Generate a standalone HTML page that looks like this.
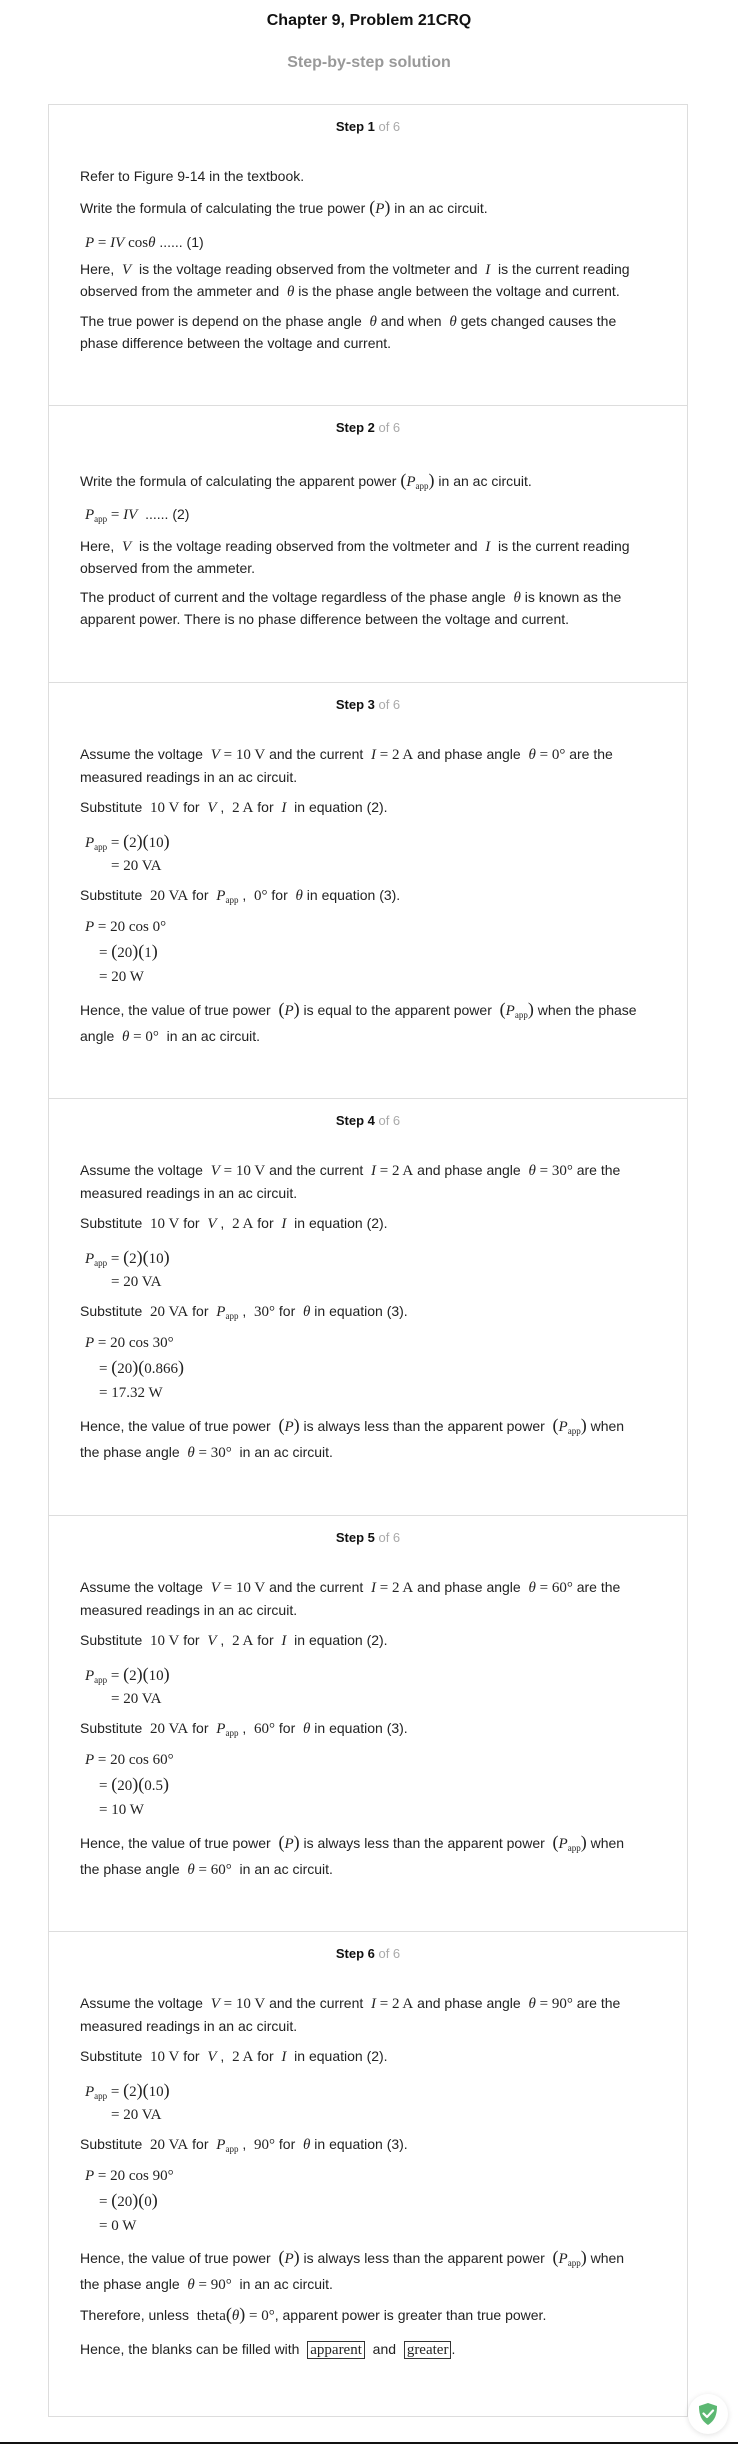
<!DOCTYPE html>
<html><head><meta charset="utf-8"><style>
body{margin:0;background:#fff;font-family:"Liberation Sans",Arial,sans-serif;color:#222;}
.page{position:relative;width:738px;height:2444px;overflow:hidden;}
.t{position:absolute;left:0;width:738px;text-align:center;top:10px;font-size:16px;font-weight:bold;color:#111;line-height:22px;}
.st{position:absolute;left:0;width:738px;text-align:center;top:52px;font-size:16px;font-weight:bold;color:#999;line-height:22px;}
.box{position:absolute;left:48px;width:640px;border:1px solid #ddd;border-top:none;box-sizing:border-box;}
.box.first{border-top:1px solid #ddd;}
.h{position:absolute;left:0;width:100%;text-align:center;font-size:13px;font-weight:bold;color:#111;line-height:22px;}
.h span{font-weight:normal;color:#aaa;}
.l{position:absolute;left:31px;font-size:14px;line-height:22px;white-space:nowrap;color:#222;}
.m{font-family:"Liberation Serif",serif;font-size:15px;}
.i{font-style:italic;}
sub{font-size:9px;font-family:"Liberation Serif",serif;vertical-align:-3px;}
.p{font-family:"Liberation Serif",serif;font-size:18px;}
.bx{border:1px solid #333;padding:0 2px;font-family:"Liberation Serif",serif;font-size:15px;}
.shield{position:absolute;left:688px;top:2394px;width:40px;height:40px;border-radius:50%;background:#fff;box-shadow:0 1px 6px rgba(0,0,0,0.12);}
.bl{position:absolute;left:0;top:2442px;width:738px;height:2px;background:#111;}
</style></head><body><div class="page">
<div class="t">Chapter 9, Problem 21CRQ</div>
<div class="st">Step-by-step solution</div>

<div class="box first" style="top:104px;height:302px;">
<div class="h" style="top:11px">Step 1 <span>of 6</span></div>
<div class="l" style="top:60px">Refer to Figure 9-14 in the textbook.</div>
<div class="l" style="top:91px">Write the formula of calculating the true power <span class="p">(</span><span class="m i">P</span><span class="p">)</span> in an ac circuit.</div>
<div class="l" style="top:126px;left:36px"><span class="m"><i>P</i> = <i>IV</i> cos<i>θ</i></span> ...... (1)</div>
<div class="l" style="top:153px">Here, &nbsp;<span class="m i">V</span>&nbsp; is the voltage reading observed from the voltmeter and &nbsp;<span class="m i">I</span>&nbsp; is the current reading</div>
<div class="l" style="top:175px">observed from the ammeter and &nbsp;<span class="m i">θ</span> is the phase angle between the voltage and current.</div>
<div class="l" style="top:205px">The true power is depend on the phase angle &nbsp;<span class="m i">θ</span> and when &nbsp;<span class="m i">θ</span> gets changed causes the</div>
<div class="l" style="top:227px">phase difference between the voltage and current.</div>
</div>

<div class="box" style="top:405px;height:278px;border-top:1px solid #ddd;">
<div class="h" style="top:11px">Step 2 <span>of 6</span></div>
<div class="l" style="top:63px">Write the formula of calculating the apparent power <span class="p">(</span><span class="m i">P</span><sub>app</sub><span class="p">)</span> in an ac circuit.</div>
<div class="l" style="top:97px;left:36px"><span class="m"><i>P</i></span><sub>app</sub><span class="m"> = <i>IV</i></span> &nbsp;...... (2)</div>
<div class="l" style="top:129px">Here, &nbsp;<span class="m i">V</span>&nbsp; is the voltage reading observed from the voltmeter and &nbsp;<span class="m i">I</span>&nbsp; is the current reading</div>
<div class="l" style="top:151px">observed from the ammeter.</div>
<div class="l" style="top:180px">The product of current and the voltage regardless of the phase angle &nbsp;<span class="m i">θ</span> is known as the</div>
<div class="l" style="top:202px">apparent power. There is no phase difference between the voltage and current.</div>
</div>

<!-- Step 3 -->
<div class="box" style="top:682px;height:417px;border-top:1px solid #ddd;">
<div class="h" style="top:11px">Step 3 <span>of 6</span></div>
<div class="l" style="top:60px">Assume the voltage &nbsp;<span class="m"><i>V</i> = 10 V</span> and the current &nbsp;<span class="m"><i>I</i> = 2 A</span> and phase angle &nbsp;<span class="m"><i>θ</i> = 0°</span> are the</div>
<div class="l" style="top:83px">measured readings in an ac circuit.</div>
<div class="l" style="top:113px">Substitute &nbsp;<span class="m">10 V</span> for &nbsp;<span class="m i">V</span> , &nbsp;<span class="m">2 A</span> for &nbsp;<span class="m i">I</span>&nbsp; in equation (2).</div>
<div class="l" style="top:147px;left:36px"><span class="m i">P</span><sub>app</sub><span class="m"> = <span class="p">(</span>2<span class="p">)(</span>10<span class="p">)</span></span></div>
<div class="l" style="top:171px;left:62px"><span class="m">= 20 VA</span></div>
<div class="l" style="top:201px">Substitute &nbsp;<span class="m">20 VA</span> for &nbsp;<span class="m i">P</span><sub>app</sub> , &nbsp;<span class="m">0°</span> for &nbsp;<span class="m i">θ</span> in equation (3).</div>
<div class="l" style="top:232px;left:36px"><span class="m"><i>P</i> = 20 cos 0°</span></div>
<div class="l" style="top:257px;left:50px"><span class="m">= <span class="p">(</span>20<span class="p">)(</span>1<span class="p">)</span></span></div>
<div class="l" style="top:282px;left:50px"><span class="m">= 20 W</span></div>
<div class="l" style="top:315px">Hence, the value of true power &nbsp;<span class="p">(</span><span class="m i">P</span><span class="p">)</span> is equal to the apparent power &nbsp;<span class="p">(</span><span class="m i">P</span><sub>app</sub><span class="p">)</span> when the phase</div>
<div class="l" style="top:342px">angle &nbsp;<span class="m"><i>θ</i> = 0°</span>&nbsp; in an ac circuit.</div>
</div>

<!-- Step 4 -->
<div class="box" style="top:1098px;height:418px;border-top:1px solid #ddd;">
<div class="h" style="top:11px">Step 4 <span>of 6</span></div>
<div class="l" style="top:60px">Assume the voltage &nbsp;<span class="m"><i>V</i> = 10 V</span> and the current &nbsp;<span class="m"><i>I</i> = 2 A</span> and phase angle &nbsp;<span class="m"><i>θ</i> = 30°</span> are the</div>
<div class="l" style="top:83px">measured readings in an ac circuit.</div>
<div class="l" style="top:113px">Substitute &nbsp;<span class="m">10 V</span> for &nbsp;<span class="m i">V</span> , &nbsp;<span class="m">2 A</span> for &nbsp;<span class="m i">I</span>&nbsp; in equation (2).</div>
<div class="l" style="top:147px;left:36px"><span class="m i">P</span><sub>app</sub><span class="m"> = <span class="p">(</span>2<span class="p">)(</span>10<span class="p">)</span></span></div>
<div class="l" style="top:171px;left:62px"><span class="m">= 20 VA</span></div>
<div class="l" style="top:201px">Substitute &nbsp;<span class="m">20 VA</span> for &nbsp;<span class="m i">P</span><sub>app</sub> , &nbsp;<span class="m">30°</span> for &nbsp;<span class="m i">θ</span> in equation (3).</div>
<div class="l" style="top:232px;left:36px"><span class="m"><i>P</i> = 20 cos 30°</span></div>
<div class="l" style="top:257px;left:50px"><span class="m">= <span class="p">(</span>20<span class="p">)(</span>0.866<span class="p">)</span></span></div>
<div class="l" style="top:282px;left:50px"><span class="m">= 17.32 W</span></div>
<div class="l" style="top:315px">Hence, the value of true power &nbsp;<span class="p">(</span><span class="m i">P</span><span class="p">)</span> is always less than the apparent power &nbsp;<span class="p">(</span><span class="m i">P</span><sub>app</sub><span class="p">)</span> when</div>
<div class="l" style="top:342px">the phase angle &nbsp;<span class="m"><i>θ</i> = 30°</span>&nbsp; in an ac circuit.</div>
</div>

<!-- Step 5 -->
<div class="box" style="top:1515px;height:417px;border-top:1px solid #ddd;">
<div class="h" style="top:11px">Step 5 <span>of 6</span></div>
<div class="l" style="top:60px">Assume the voltage &nbsp;<span class="m"><i>V</i> = 10 V</span> and the current &nbsp;<span class="m"><i>I</i> = 2 A</span> and phase angle &nbsp;<span class="m"><i>θ</i> = 60°</span> are the</div>
<div class="l" style="top:83px">measured readings in an ac circuit.</div>
<div class="l" style="top:113px">Substitute &nbsp;<span class="m">10 V</span> for &nbsp;<span class="m i">V</span> , &nbsp;<span class="m">2 A</span> for &nbsp;<span class="m i">I</span>&nbsp; in equation (2).</div>
<div class="l" style="top:147px;left:36px"><span class="m i">P</span><sub>app</sub><span class="m"> = <span class="p">(</span>2<span class="p">)(</span>10<span class="p">)</span></span></div>
<div class="l" style="top:171px;left:62px"><span class="m">= 20 VA</span></div>
<div class="l" style="top:201px">Substitute &nbsp;<span class="m">20 VA</span> for &nbsp;<span class="m i">P</span><sub>app</sub> , &nbsp;<span class="m">60°</span> for &nbsp;<span class="m i">θ</span> in equation (3).</div>
<div class="l" style="top:232px;left:36px"><span class="m"><i>P</i> = 20 cos 60°</span></div>
<div class="l" style="top:257px;left:50px"><span class="m">= <span class="p">(</span>20<span class="p">)(</span>0.5<span class="p">)</span></span></div>
<div class="l" style="top:282px;left:50px"><span class="m">= 10 W</span></div>
<div class="l" style="top:315px">Hence, the value of true power &nbsp;<span class="p">(</span><span class="m i">P</span><span class="p">)</span> is always less than the apparent power &nbsp;<span class="p">(</span><span class="m i">P</span><sub>app</sub><span class="p">)</span> when</div>
<div class="l" style="top:342px">the phase angle &nbsp;<span class="m"><i>θ</i> = 60°</span>&nbsp; in an ac circuit.</div>
</div>

<!-- Step 6 -->
<div class="box" style="top:1931px;height:486px;border-top:1px solid #ddd;">
<div class="h" style="top:11px">Step 6 <span>of 6</span></div>
<div class="l" style="top:60px">Assume the voltage &nbsp;<span class="m"><i>V</i> = 10 V</span> and the current &nbsp;<span class="m"><i>I</i> = 2 A</span> and phase angle &nbsp;<span class="m"><i>θ</i> = 90°</span> are the</div>
<div class="l" style="top:83px">measured readings in an ac circuit.</div>
<div class="l" style="top:113px">Substitute &nbsp;<span class="m">10 V</span> for &nbsp;<span class="m i">V</span> , &nbsp;<span class="m">2 A</span> for &nbsp;<span class="m i">I</span>&nbsp; in equation (2).</div>
<div class="l" style="top:147px;left:36px"><span class="m i">P</span><sub>app</sub><span class="m"> = <span class="p">(</span>2<span class="p">)(</span>10<span class="p">)</span></span></div>
<div class="l" style="top:171px;left:62px"><span class="m">= 20 VA</span></div>
<div class="l" style="top:201px">Substitute &nbsp;<span class="m">20 VA</span> for &nbsp;<span class="m i">P</span><sub>app</sub> , &nbsp;<span class="m">90°</span> for &nbsp;<span class="m i">θ</span> in equation (3).</div>
<div class="l" style="top:232px;left:36px"><span class="m"><i>P</i> = 20 cos 90°</span></div>
<div class="l" style="top:257px;left:50px"><span class="m">= <span class="p">(</span>20<span class="p">)(</span>0<span class="p">)</span></span></div>
<div class="l" style="top:282px;left:50px"><span class="m">= 0 W</span></div>
<div class="l" style="top:314px">Hence, the value of true power &nbsp;<span class="p">(</span><span class="m i">P</span><span class="p">)</span> is always less than the apparent power &nbsp;<span class="p">(</span><span class="m i">P</span><sub>app</sub><span class="p">)</span> when</div>
<div class="l" style="top:341px">the phase angle &nbsp;<span class="m"><i>θ</i> = 90°</span>&nbsp; in an ac circuit.</div>
<div class="l" style="top:371px">Therefore, unless &nbsp;<span class="m">theta<span class="p">(</span><i>θ</i><span class="p">)</span> = 0°</span>, apparent power is greater than true power.</div>
<div class="l" style="top:406px">Hence, the blanks can be filled with &nbsp;<span class="bx">apparent</span>&nbsp; and &nbsp;<span class="bx">greater</span>.</div>
</div>

<div class="shield"><svg width="40" height="40" viewBox="0 0 40 40"><path d="M20 9 L29 12 C29 22 26 27 20 31 C14 27 11 22 11 12 Z" fill="#5cb872"/><path d="M15.5 19.5 L19 23 L25 16.5" fill="none" stroke="#fff" stroke-width="2.2" stroke-linecap="round" stroke-linejoin="round"/></svg></div>
<div class="bl"></div>
</div></body></html>
